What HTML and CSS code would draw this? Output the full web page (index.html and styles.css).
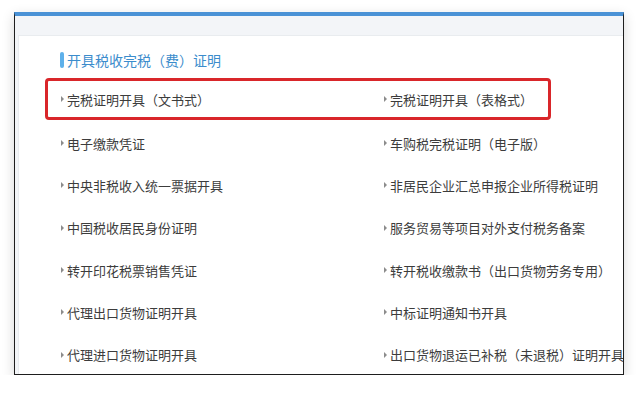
FILE: index.html
```html
<!DOCTYPE html>
<html lang="zh-CN">
<head>
    <meta charset="UTF-8">
    <meta name="viewport" content="width=device-width, initial-scale=1.0">
    <title>开具税收完税（费）证明</title>
    <link rel="stylesheet" href="styles.css">
</head>
<body>
    <!-- Окно со списком -->
    <div class="frame">
        <div class="band">
            <div class="card">
                <div class="title"><span class="title-bar"></span>开具税收完税（费）证明</div>

                <div class="row marked">
                    <div class="item"><i class="arrow"></i>完税证明开具（文书式）</div>
                    <div class="item"><i class="arrow"></i>完税证明开具（表格式）</div>
                </div>
                <div class="row">
                    <div class="item"><i class="arrow"></i>电子缴款凭证</div>
                    <div class="item"><i class="arrow"></i>车购税完税证明（电子版）</div>
                </div>
                <div class="row">
                    <div class="item"><i class="arrow"></i>中央非税收入统一票据开具</div>
                    <div class="item"><i class="arrow"></i>非居民企业汇总申报企业所得税证明</div>
                </div>
                <div class="row">
                    <div class="item"><i class="arrow"></i>中国税收居民身份证明</div>
                    <div class="item"><i class="arrow"></i>服务贸易等项目对外支付税务备案</div>
                </div>
                <div class="row">
                    <div class="item"><i class="arrow"></i>转开印花税票销售凭证</div>
                    <div class="item"><i class="arrow"></i>转开税收缴款书（出口货物劳务专用）</div>
                </div>
                <div class="row">
                    <div class="item"><i class="arrow"></i>代理出口货物证明开具</div>
                    <div class="item"><i class="arrow"></i>中标证明通知书开具</div>
                </div>
                <div class="row">
                    <div class="item"><i class="arrow"></i>代理进口货物证明开具</div>
                    <div class="item"><i class="arrow"></i>出口货物退运已补税（未退税）证明开具</div>
                </div>
            </div>
        </div>
    </div>
</body>
</html>
```

FILE: styles.css
```css
body {
    margin: 0;
    background-color: #ffffff;
    font-family: "Noto Sans CJK SC", "Noto Sans", sans-serif;
}

.frame {
    width: 608px;
    height: 358px;
    margin: 12px 0 0 14px;
    border: 1px solid #1e1e1e;
    border-top: 4px solid #4a92d6;
    box-shadow: 0 4px 12px rgba(0, 0, 0, 0.16);
    overflow: hidden;
}

.band {
    height: 100%;
    box-sizing: border-box;
    padding: 19px 0 0 3px;
    background-color: #f3f5f8; /* серая полоса сверху */
}

.card {
    height: 100%;
    padding-left: 26px;
    background-color: #ffffff;
    border-top: 1px solid #e9ecef;
    border-left: 1px solid #e9ecef;
}

.title {
    display: flex;
    align-items: center;
    gap: 3px;
    margin: 14px 0 8px 15px;
    height: 20px;
    font-size: 14px;
    color: #3b8ccc;
}

.title-bar {
    width: 4px;
    height: 16px;
    border-radius: 2px;
    background-color: #5eb0ea;
}

.row {
    display: flex;
    width: 506px;
    height: 42.3px;
    box-sizing: border-box;
    padding-left: 13px;
    border: 3px solid transparent;
    border-radius: 4px;
    align-items: center;
    white-space: nowrap;
}

/* Красная рамка вокруг первой строки */
.marked {
    height: 42px;
    margin-bottom: 2px;
    border-color: #d9262a;
}

.item {
    display: flex;
    align-items: center;
    gap: 3px;
    font-size: 13px;
    color: #3c3c3c;
}

.item:first-child {
    width: 323px;
    flex-shrink: 0;
}

.arrow {
    width: 0;
    height: 0;
    border-left: 3px solid #8c8c8c;
    border-top: 3px solid transparent;
    border-bottom: 3px solid transparent;
}
```
